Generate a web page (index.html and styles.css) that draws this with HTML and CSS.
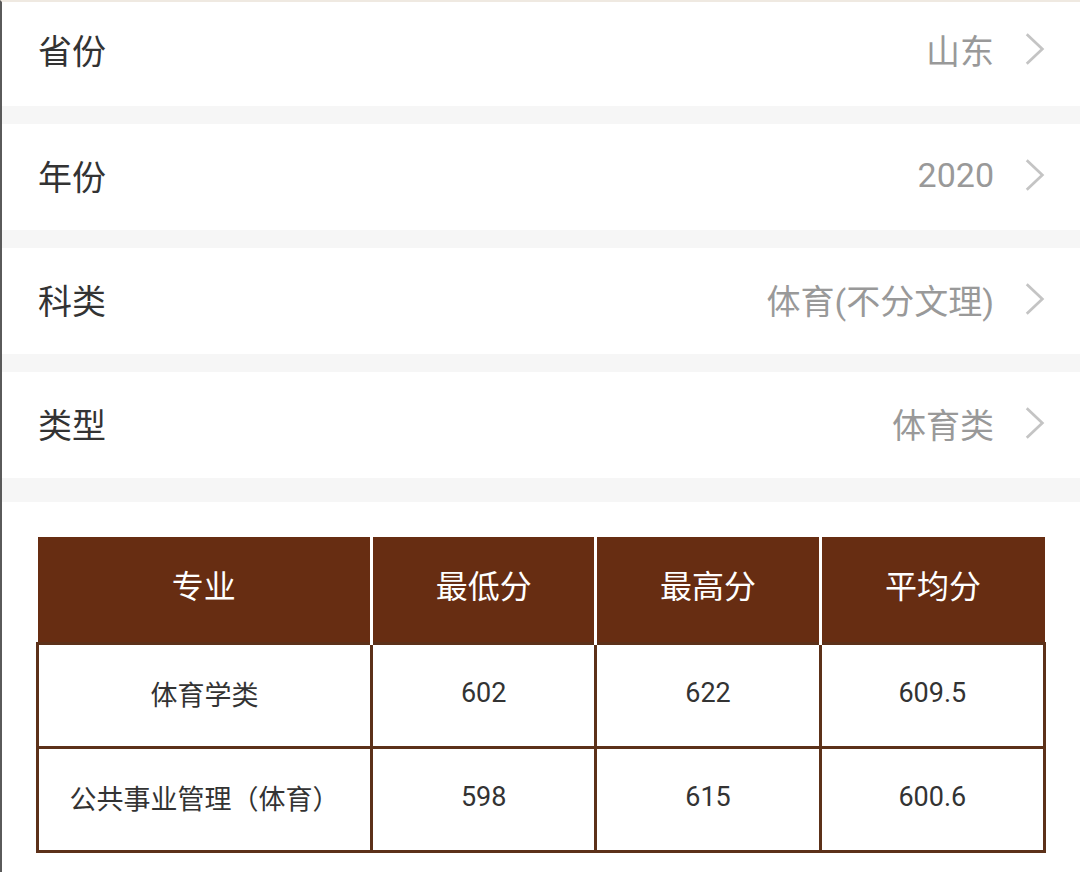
FILE: index.html
```html
<!DOCTYPE html>
<html lang="zh">
<head>
<meta charset="utf-8">
<link rel="stylesheet" href="styles.css">
</head>
<body>
<div class="page">
  <div class="rows">
    <div class="row first"><span class="label">省份</span><span class="value">山东</span><svg class="chev" viewBox="0 0 24 36"><path d="M3 2 L20 18 L3 34"/></svg></div>
    <div class="row"><span class="label">年份</span><span class="value">2020</span><svg class="chev" viewBox="0 0 24 36"><path d="M3 2 L20 18 L3 34"/></svg></div>
    <div class="row"><span class="label">科类</span><span class="value">体育(不分文理)</span><svg class="chev" viewBox="0 0 24 36"><path d="M3 2 L20 18 L3 34"/></svg></div>
    <div class="row last"><span class="label">类型</span><span class="value">体育类</span><svg class="chev" viewBox="0 0 24 36"><path d="M3 2 L20 18 L3 34"/></svg></div>
  </div>
  <div class="table-wrap">
    <table class="scores">
      <thead>
        <tr><th class="c1">专业</th><th>最低分</th><th>最高分</th><th>平均分</th></tr>
      </thead>
      <tbody>
        <tr><td>体育学类</td><td>602</td><td>622</td><td>609.5</td></tr>
        <tr><td>公共事业管理（体育）</td><td>598</td><td>615</td><td>600.6</td></tr>
      </tbody>
    </table>
  </div>
</div>
</body>
</html>
```

FILE: styles.css
```css
html, body {
  margin: 0;
  padding: 0;
  background: #ffffff;
}
body {
  font-family: "Roboto", "Noto Sans CJK SC", sans-serif;
}
.page {
  width: 1080px;
  height: 872px;
  box-sizing: border-box;
  border-left: 2px solid #5a5a5a;
  border-top: 2px solid #efe9e1;
  overflow: hidden;
}
.rows {
  display: flex;
  flex-direction: column;
  gap: 18px;
  background: #f6f6f6;
  padding-bottom: 24px;
}
.row {
  height: 106px;
  box-sizing: border-box;
  background: #ffffff;
  display: flex;
  align-items: center;
  padding: 0 34px 4px 36px;
}
.row.first {
  height: 104px;
  padding-bottom: 10px;
}
.label {
  font-size: 34px;
  color: #333333;
  flex: 1;
}
.value {
  font-size: 34px;
  color: #999999;
  margin-right: 30px;
}
.chev {
  width: 22px;
  height: 36px;
  fill: none;
  stroke: #c4c4c4;
  stroke-width: 3;
}
.table-wrap {
  padding: 35px 35px 0 34px;
}
.scores {
  width: 1010px;
  border-collapse: collapse;
  table-layout: fixed;
}
.scores th {
  background: #672d12;
  color: #ffffff;
  font-weight: 400;
  font-size: 32px;
  height: 106px;
  border-left: 3px solid #ffffff;
  padding: 0 0 10px 0;
  box-sizing: border-box;
}
.scores th.c1 {
  width: 334px;
  border-left: none;
}
.scores td {
  border: 3px solid #5c3119;
  text-align: center;
  font-size: 27px;
  color: #333333;
  height: 97px;
  padding: 0 0 4px 0;
}
```
